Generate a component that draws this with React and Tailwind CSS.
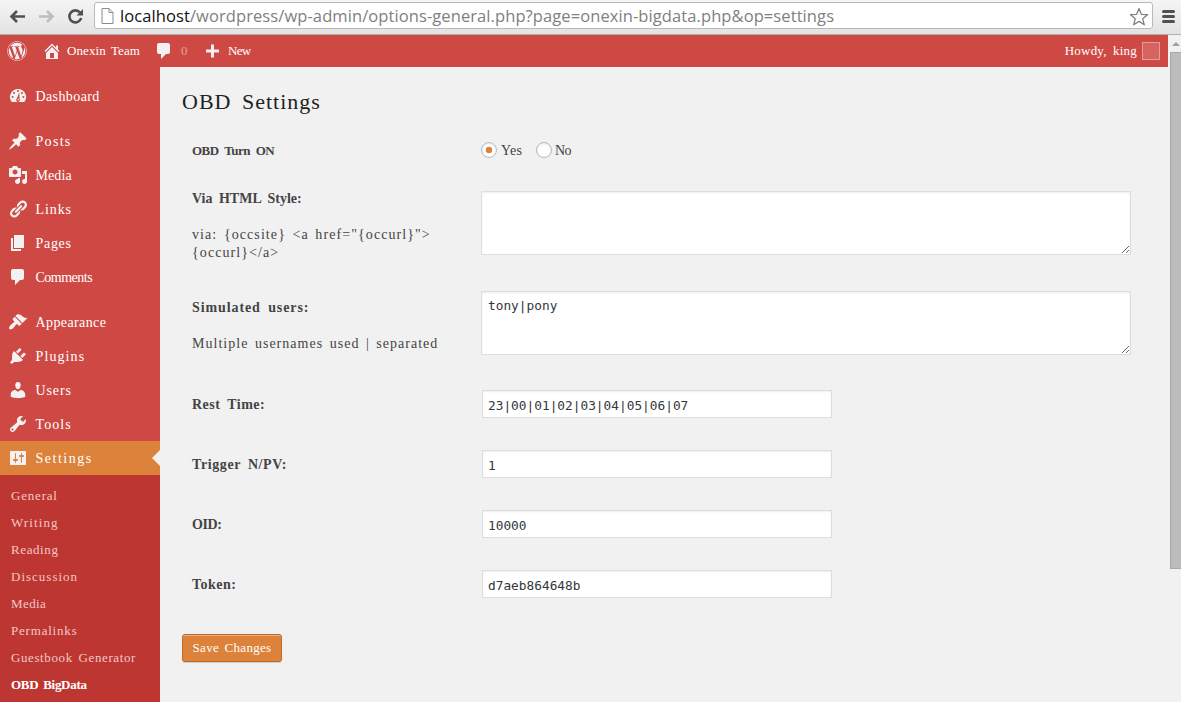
import React, { useState } from "react";
import { FaWordpress } from "react-icons/fa";

const icons = {
  post: "M10.44 3.02l1.82-1.82 6.36 6.35-1.83 1.82c-1.05-.68-2.48-.57-3.41.36l-.75.75c-.92.93-1.04 2.35-.35 3.41l-1.83 1.82-2.41-2.41-2.8 2.79c-.42.42-3.38 2.71-3.8 2.29s1.86-3.39 2.28-3.81l2.79-2.79L4.1 9.36l1.83-1.82c1.05.69 2.48.57 3.4-.36l.75-.75c.93-.92 1.05-2.35.36-3.41z",
  media: "M13 11V4c0-.55-.45-1-1-1h-1.67L9 1H5L3.67 3H2c-.55 0-1 .45-1 1v7c0 .55.45 1 1 1h10c.55 0 1-.45 1-1zM7 4.5c1.38 0 2.5 1.12 2.5 2.5S8.38 9.5 7 9.5 4.5 8.38 4.5 7 5.62 4.5 7 4.5zM14 6h5v10.5c0 1.38-1.12 2.5-2.5 2.5S14 17.88 14 16.5s1.12-2.5 2.5-2.5c.17 0 .34.02.5.05V9h-3V6zm-4 8.05V13h2v3.5c0 1.38-1.12 2.5-2.5 2.5S7 17.88 7 16.5 8.12 14 9.5 14c.17 0 .34.02.5.05z",
  links: "M17.74 2.76c1.68 1.69 1.68 4.41 0 6.1l-1.53 1.52c-1.12 1.12-2.7 1.47-4.14 1.09l2.62-2.61.76-.77.76-.76c.84-.84.84-2.2 0-3.04-.84-.85-2.2-.85-3.04 0l-.77.76-3.38 3.38c-.37-1.44-.02-3.02 1.1-4.14l1.52-1.53c1.69-1.68 4.42-1.68 6.1 0zM8.59 13.43l5.34-5.34c.42-.42.42-1.1 0-1.52-.44-.43-1.13-.39-1.53 0l-5.33 5.34c-.42.42-.42 1.1 0 1.52.44.43 1.13.39 1.52 0zm-.76 2.29l4.14-4.15c.38 1.44.03 3.02-1.09 4.14l-1.52 1.53c-1.69 1.68-4.41 1.68-6.1 0-1.68-1.68-1.68-4.42 0-6.1l1.53-1.52c1.12-1.12 2.7-1.47 4.14-1.1l-4.14 4.15c-.85.84-.85 2.2 0 3.05.84.84 2.2.84 3.04 0z",
  pages: "M6 15V2h10v13H6zm-1 1h8v2H3V5h2v11z",
  comments: "M5 2h9c1.1 0 2 .9 2 2v7c0 1.1-.9 2-2 2h-2l-5 5v-5H5c-1.1 0-2-.9-2-2V4c0-1.1.9-2 2-2z",
  appearance: "M14.48 11.06L7.41 3.99l1.5-1.5c.5-.56 2.3-.47 3.51.32 1.21.8 1.43 1.28 2.91 2.1 1.18.64 2.45 1.26 4.45.85zm-.71.71L6.7 4.7 4.93 6.47c-.39.39-.39 1.02 0 1.41l1.06 1.06c.39.39.39 1.03 0 1.42-.6.6-1.43 1.11-2.21 1.69-.35.26-.7.53-1.01.84C1.43 14.23.4 16.08 1.4 17.07c.99 1 2.84-.03 4.18-1.36.31-.31.58-.66.85-1.02.57-.78 1.08-1.61 1.69-2.21.39-.39 1.02-.39 1.41 0l1.06 1.06c.39.39 1.02.39 1.41 0z",
  plugins: "M13.11 4.36L9.87 7.6 8 5.73l3.24-3.24c.35-.34 1.05-.2 1.56.32.52.51.66 1.21.31 1.55zm-8 1.77l.91-1.12 9.01 9.01-1.19.84c-.71.71-2.63 1.16-3.82 1.16H6.14L4.9 17.26c-.59.59-1.54.59-2.12 0-.59-.58-.59-1.53 0-2.12l1.24-1.24v-3.88c0-1.13.4-3.19 1.09-3.89zm7.26 3.97l3.24-3.24c.34-.35 1.04-.21 1.55.31.52.51.66 1.21.31 1.55l-3.24 3.25z",
  users: "M10 9.25c-2.27 0-2.73-3.44-2.73-3.44C7 4.02 7.82 2 9.97 2c2.16 0 2.98 2.02 2.71 3.81 0 0-.41 3.44-2.68 3.44zm0 2.57L12.72 10c2.39 0 4.52 2.33 4.52 4.53v2.49s-3.65 1.13-7.24 1.13c-3.65 0-7.24-1.13-7.24-1.13v-2.49c0-2.25 1.94-4.48 4.47-4.48z",
  tools: "M16.68 9.77c-1.34 1.34-3.3 1.67-4.95.99l-5.41 6.52c-.99.99-2.59.99-3.58 0s-.99-2.59 0-3.57l6.52-5.42c-.68-1.65-.35-3.61.99-4.95 1.28-1.28 3.12-1.62 4.72-1.06l-2.89 2.89 2.82 2.82 2.86-2.87c.53 1.58.18 3.39-1.08 4.65zM3.81 16.21c.4.39 1.04.39 1.43 0 .4-.4.4-1.04 0-1.43-.39-.4-1.03-.4-1.43 0-.39.39-.39 1.03 0 1.43z",
  settings: "M18 16V4c0-.55-.45-1-1-1H3c-.55 0-1 .45-1 1v12c0 .55.45 1 1 1h14c.55 0 1-.45 1-1zM8 11h1c.55 0 1 .45 1 1s-.45 1-1 1H8v1.5c0 .28-.22.5-.5.5s-.5-.22-.5-.5V13H6c-.55 0-1-.45-1-1s.45-1 1-1h1V5.5c0-.28.22-.5.5-.5s.5.22.5.5V11zm5-2h-1c-.55 0-1-.45-1-1s.45-1 1-1h1V5.5c0-.28.22-.5.5-.5s.5.22.5.5V7h1c.55 0 1 .45 1 1s-.45 1-1 1h-1v5.5c0 .28-.22.5-.5.5s-.5-.22-.5-.5V9z",
  home: "M16 8.5l1.53 1.53-1.06 1.06L10 4.6l-6.47 6.49-1.06-1.06L10 2.5l4 4v-2h2v4zm-6-2.46l6 5.99V18H4v-5.97zM12 17v-5H8v5h4z",
  plus: "M17 8.500v3h-5v5H9v-5H4v-3h5v-5h3v5z",
};

const Icon = ({ name }) => {
  if (name === "dashboard") {
    return (
      <svg viewBox="0 0 20 20" className="w-5 h-5 shrink-0">
        <path d="M3.76 16h12.48A7.98 7.98 0 0 0 10 3a7.98 7.98 0 0 0-6.24 13z" fill="#f3f1f1" />
        <g fill="#cf4944">
          <circle cx="10" cy="5" r="1" />
          <circle cx="6" cy="7" r="1" />
          <circle cx="14" cy="7" r="1" />
          <circle cx="4.6" cy="11" r="1" />
          <circle cx="15.4" cy="11" r="1" />
          <path d="M11.3 6.2l.3 6.600a1.900 1.900 0 1 1-2.600-.5z" />
        </g>
        <circle cx="10.2" cy="13.6" r=".8" fill="#f3f1f1" />
      </svg>
    );
  }
  return (
    <svg viewBox="0 0 20 20" className="w-5 h-5 shrink-0" fill="#f3f1f1" fillRule="evenodd">
      <path d={icons[name]} />
    </svg>
  );
};

const menuGroups = [
  [{ icon: "dashboard", label: "Dashboard", track: "tracking-[0.4px]" }],
  [
    { icon: "post", label: "Posts", track: "tracking-[1.3px]" },
    { icon: "media", label: "Media", track: "tracking-[0.1px]" },
    { icon: "links", label: "Links", track: "tracking-[0.9px]" },
    { icon: "pages", label: "Pages", track: "tracking-[0.7px]" },
    { icon: "comments", label: "Comments", track: "tracking-[-0.5px]" },
  ],
  [
    { icon: "appearance", label: "Appearance", track: "tracking-[0.4px]" },
    { icon: "plugins", label: "Plugins", track: "tracking-[1.1px]" },
    { icon: "users", label: "Users", track: "tracking-[0.9px]" },
    { icon: "tools", label: "Tools", track: "tracking-[1.1px]" },
    { icon: "settings", label: "Settings", track: "tracking-[1.5px]", active: true },
  ],
];

const submenu = [
  { label: "General", track: "tracking-[0.8px]" },
  { label: "Writing", track: "tracking-[1.1px]" },
  { label: "Reading", track: "tracking-[0.6px]" },
  { label: "Discussion", track: "tracking-[1px]" },
  { label: "Media", track: "tracking-[0.4px]" },
  { label: "Permalinks", track: "tracking-[0.8px]" },
  { label: "Guestbook Generator", track: "tracking-[0.6px]" },
];

const BrowserBar = () => (
  <div className="flex h-[35px] items-center border-b border-[#b0b0b0] bg-gradient-to-b from-[#f5f5f5] to-[#e3e3e3] font-['Open_Sans',sans-serif]">
    <svg viewBox="0 0 94 35" className="h-[35px] w-[94px] shrink-0" fill="none" strokeWidth="2.6">
      <path d="M25 16.500H12M17 11l-5.500 5.500L17 22" stroke="#505050" />
      <path d="M39 16.500h13M47 11l5.500 5.500L47 22" stroke="#bdbdbd" />
      <path d="M80 12.500a6 6 0 1 0 1.200 5.500" stroke="#505050" />
      <path d="M83 9v6.500h-6.500z" fill="#505050" />
    </svg>
    <div className="-mt-[3px] flex h-[27px] w-[1059px] items-center rounded-[3px] border border-[#b9b9b9] bg-white pr-[3px] pl-[6px]">
      <svg viewBox="0 0 13 16" className="h-4 w-[13px]" fill="#fff" stroke="#8c8c8c">
        <path d="M1 .5h7l4 4v11H1zM8 .5v4h4" />
      </svg>
      <span className="mt-px ml-[6px] flex-1 whitespace-nowrap text-[16.500px] tracking-[0.090px] text-[#808080]">
        <span className="text-[#111]">localhost</span>/wordpress/wp-admin/options-general.php?page=onexin-bigdata.php&amp;op=settings
      </span>
      <svg viewBox="0 0 20 20" className="mt-[2px] h-5 w-5" fill="#fff" stroke="#808080" strokeWidth="1.300" strokeLinejoin="round">
        <path d="M10 1.500l2.300 5.800 6.200.4-4.800 4 1.600 6.100-5.300-3.400-5.300 3.400 1.600-6.100-4.800-4 6.200-.4z" />
      </svg>
    </div>
    <div className="-mt-[2px] ml-[9px] flex w-[13px] flex-col gap-[2px]">
      <div className="h-[3px] rounded-sm bg-[#505050]" />
      <div className="h-[3px] rounded-sm bg-[#505050]" />
      <div className="h-[3px] rounded-sm bg-[#505050]" />
    </div>
  </div>
);

const AdminBar = () => (
  <div className="flex h-8 items-center bg-[#cf4944] text-[13px] text-white">
    <FaWordpress className="ml-[7px] h-5 w-5 text-[#f3f1f1]" />
    <div className="ml-[15px] flex w-[112px] items-center">
      <Icon name="home" />
      <span className="ml-[5px] whitespace-nowrap tracking-[0.1px] [word-spacing:2px]">Onexin Team</span>
    </div>
    <div className="flex w-[48px] items-center">
      <Icon name="comments" />
      <span className="ml-[7px] text-[#e79d9a]">0</span>
    </div>
    <Icon name="plus" />
    <span className="ml-[6px] tracking-[-0.700px]">New</span>
    <span className="ml-auto whitespace-nowrap tracking-[0.2px] [word-spacing:3px]">Howdy, king</span>
    <span className="mr-[8px] ml-[5px] h-[18px] w-[18px] border border-[#d9a09d] bg-[#d8625e]" />
  </div>
);

const Sidebar = () => (
  <div className="flex w-40 shrink-0 flex-col bg-[#cf4944] pt-3 text-[14px] text-white">
    {menuGroups.map((group, i) => (
      <div key={i} className={i > 0 ? "mt-[11px]" : ""}>
        {group.map((item) => (
          <div
            key={item.label}
            className={`flex h-[34px] items-center pl-2 ${item.active ? "bg-[#dd823b]" : ""}`}
          >
            <Icon name={item.icon} />
            <span className={`ml-[7.500px] ${item.track}`}>{item.label}</span>
            {item.active && (
              <span className="ml-auto border-y-8 border-r-8 border-y-transparent border-r-[#f1f1f1]" />
            )}
          </div>
        ))}
      </div>
    ))}
    <div className="flex-1 bg-[#be3631] pt-[7px] text-[13px] text-[#f1c8c6] [word-spacing:2px]">
      {submenu.map((item) => (
        <div key={item.label} className={`h-[27px] pl-[11px] leading-[27px] whitespace-nowrap ${item.track}`}>
          {item.label}
        </div>
      ))}
      <div className="h-[27px] pl-[11px] leading-[27px] font-bold tracking-[-0.3px] text-white">OBD BigData</div>
    </div>
  </div>
);

const Radio = ({ checked, onChange }) => (
  <input
    type="radio"
    checked={checked}
    onChange={onChange}
    className="h-4 w-4 appearance-none rounded-full border border-[#b4b9be] bg-white shadow-[inset_0_1px_2px_rgba(0,0,0,0.1)] checked:bg-[radial-gradient(circle,#dd823b_3px,white_3.600px)]"
  />
);

const fieldClass =
  "block border border-[#ddd] bg-white font-['DejaVu_Sans_Mono',monospace] text-[12.800px] text-[#32373c] shadow-[inset_0_1px_2px_rgba(0,0,0,0.07)] outline-none";

const inputs = [
  { name: "rest", label: "Rest Time:", value: "23|00|01|02|03|04|05|06|07", track: "tracking-[0.5px]" },
  { name: "trigger", label: "Trigger N/PV:", value: "1", track: "tracking-[0.6px]" },
  { name: "oid", label: "OID:", value: "10000", track: "tracking-[-0.4px]" },
  { name: "token", label: "Token:", value: "d7aeb864648b", track: "tracking-[0.5px]" },
];

const SettingsForm = () => {
  const [enabled, setEnabled] = useState(true);

  return (
    <form className="flex-1 pl-[22px] text-[14px] leading-[18px] text-[#444]" onSubmit={(e) => e.preventDefault()}>
      <h2 className="mt-[20px] h-[30px] text-[22px] leading-[30px] tracking-[1px] text-[#222] [word-spacing:4px]">
        OBD Settings
      </h2>

      <div className="mt-[24px] flex h-[50px] pl-[10px]">
        <div className="mt-px w-[289px] text-[13px] font-bold tracking-[-0.5px] [word-spacing:3px]">OBD Turn ON</div>
        <div className="flex h-[18px] items-center">
          <Radio checked={enabled} onChange={() => setEnabled(true)} />
          <span className="mt-[2px] ml-1 w-[35px] tracking-[0.3px]">Yes</span>
          <Radio checked={!enabled} onChange={() => setEnabled(false)} />
          <span className="mt-[2px] ml-[3px] tracking-[-0.7px]">No</span>
        </div>
      </div>

      <div className="flex h-[100px] pl-[10px]">
        <div className="w-[289px] whitespace-nowrap">
          <div className="-mt-[1px] font-bold tracking-[0px] [word-spacing:3px]">Via HTML Style:</div>
          <div className="mt-[18px] tracking-[1.080px] [word-spacing:2px]">
            via: {"{occsite}"} &lt;a href="{"{occurl}"}"&gt;
            <br />
            {"{occurl}"}&lt;/a&gt;
          </div>
        </div>
        <textarea className={`${fieldClass} h-16 w-[650px] px-[6px] py-[5px] leading-[18px]`} />
      </div>

      <div className="flex h-[99px] pl-[10px]">
        <div className="w-[289px] whitespace-nowrap">
          <div className="mt-[8px] font-bold tracking-[0.900px] [word-spacing:3px]">Simulated users:</div>
          <div className="mt-[18px] tracking-[1.020px] [word-spacing:2px]">Multiple usernames used | separated</div>
        </div>
        <textarea className={`${fieldClass} h-16 w-[650px] px-[6px] py-[5px] leading-[18px]`} defaultValue="tony|pony" />
      </div>

      {inputs.map((field) => (
        <div key={field.name} className="flex h-[60px] pl-[10px]">
          <label htmlFor={field.name} className={`mt-[6px] w-[290px] font-bold [word-spacing:3px] ${field.track}`}>
            {field.label}
          </label>
          <input id={field.name} defaultValue={field.value} className={`${fieldClass} h-7 w-[350px] px-[5px] pt-[2px]`} />
        </div>
      ))}

      <button className="mt-[4px] h-7 w-[100px] rounded-[3px] border border-[#c36922] bg-[#dd823b] text-[13px] leading-[26px] tracking-[0.3px] whitespace-nowrap text-white shadow-[inset_0_1px_0_#ebb083,0_1px_0_rgba(0,0,0,0.15)] [word-spacing:2px]">
        Save Changes
      </button>
    </form>
  );
};

const App = () => {
  return (
    <div className="flex h-[702px] w-[1181px] flex-col overflow-hidden bg-[#f1f1f1] font-['Liberation_Serif',serif]">
      <BrowserBar />
      <div className="flex min-h-0 flex-1">
        <div className="flex w-[1168px] flex-col">
          <AdminBar />
          <div className="flex min-h-0 flex-1">
            <Sidebar />
            <SettingsForm />
          </div>
        </div>
        {/* Scrollbar */}
        <div className="flex w-[13px] flex-col items-end bg-[#f1f1f1]">
          <div className="flex h-[17px] w-[11px] items-center justify-center">
            <span className="border-x-4 border-b-4 border-x-transparent border-b-[#a0a0a0]" />
          </div>
          <div className="h-[517px] w-[11px] border border-r-0 border-[#a8a8a8] bg-[#bcbcbc]" />
        </div>
      </div>
    </div>
  );
};

export default App;
